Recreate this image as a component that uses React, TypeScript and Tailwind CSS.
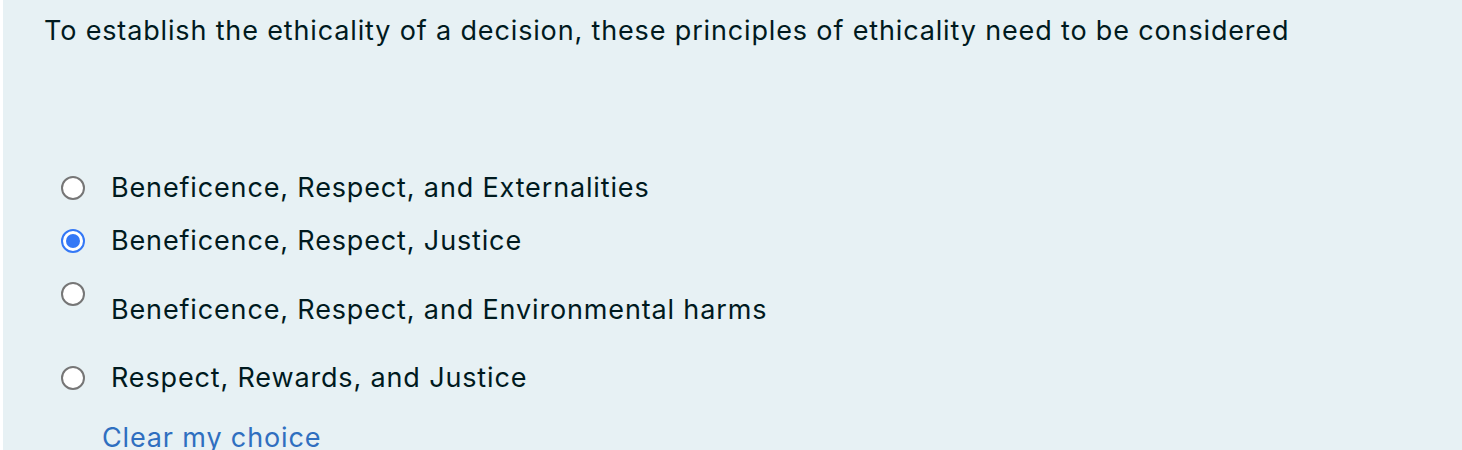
import type React from "react"

const options = [
  { label: "Beneficence, Respect, and Externalities", checked: false },
  { label: "Beneficence, Respect, Justice", checked: true },
  { label: "Beneficence, Respect, and Environmental harms", checked: false, offset: true },
  { label: "Respect, Rewards, and Justice", checked: false },
]

const Radio: React.FC<{ checked: boolean }> = ({ checked }) =>
  checked ? (
    <span className="flex h-[24px] w-[24px] shrink-0 items-center justify-center rounded-full border-[2px] border-[#3478f6] bg-white">
      <span className="h-[14px] w-[14px] rounded-full bg-[#3478f6]" />
    </span>
  ) : (
    <span className="block h-[24px] w-[24px] shrink-0 rounded-full border-[2px] border-[#767676] bg-white" />
  )

export default function App() {
  return (
    <div className="h-[450px] w-full overflow-hidden bg-white pl-[3px] font-['Inter',sans-serif] tracking-[0.85px] text-[#001a1e]">
      <div className="h-full bg-[#e7f1f4] pt-[13px]">
        <p className="pl-[41px] text-[27px] leading-[36px]">
          To establish the ethicality of a decision, these principles of ethicality need to be considered
        </p>

        <div className="mt-[121px] flex flex-col gap-[17px] pl-[58px]">
          {options.map((o) => (
            <label key={o.label} className="flex items-start gap-[26px]">
              <span className="pt-[6px]">
                <Radio checked={o.checked} />
              </span>
              <span className={`text-[27px] leading-[36px] ${o.offset ? "pt-[16px] pb-[15px]" : ""}`}>
                {o.label}
              </span>
            </label>
          ))}
        </div>

        <a href="#" className="mt-[24px] block pl-[99px] text-[27px] leading-[36px] text-[#2f6fc0]">
          Clear my choice
        </a>
      </div>
    </div>
  )
}
